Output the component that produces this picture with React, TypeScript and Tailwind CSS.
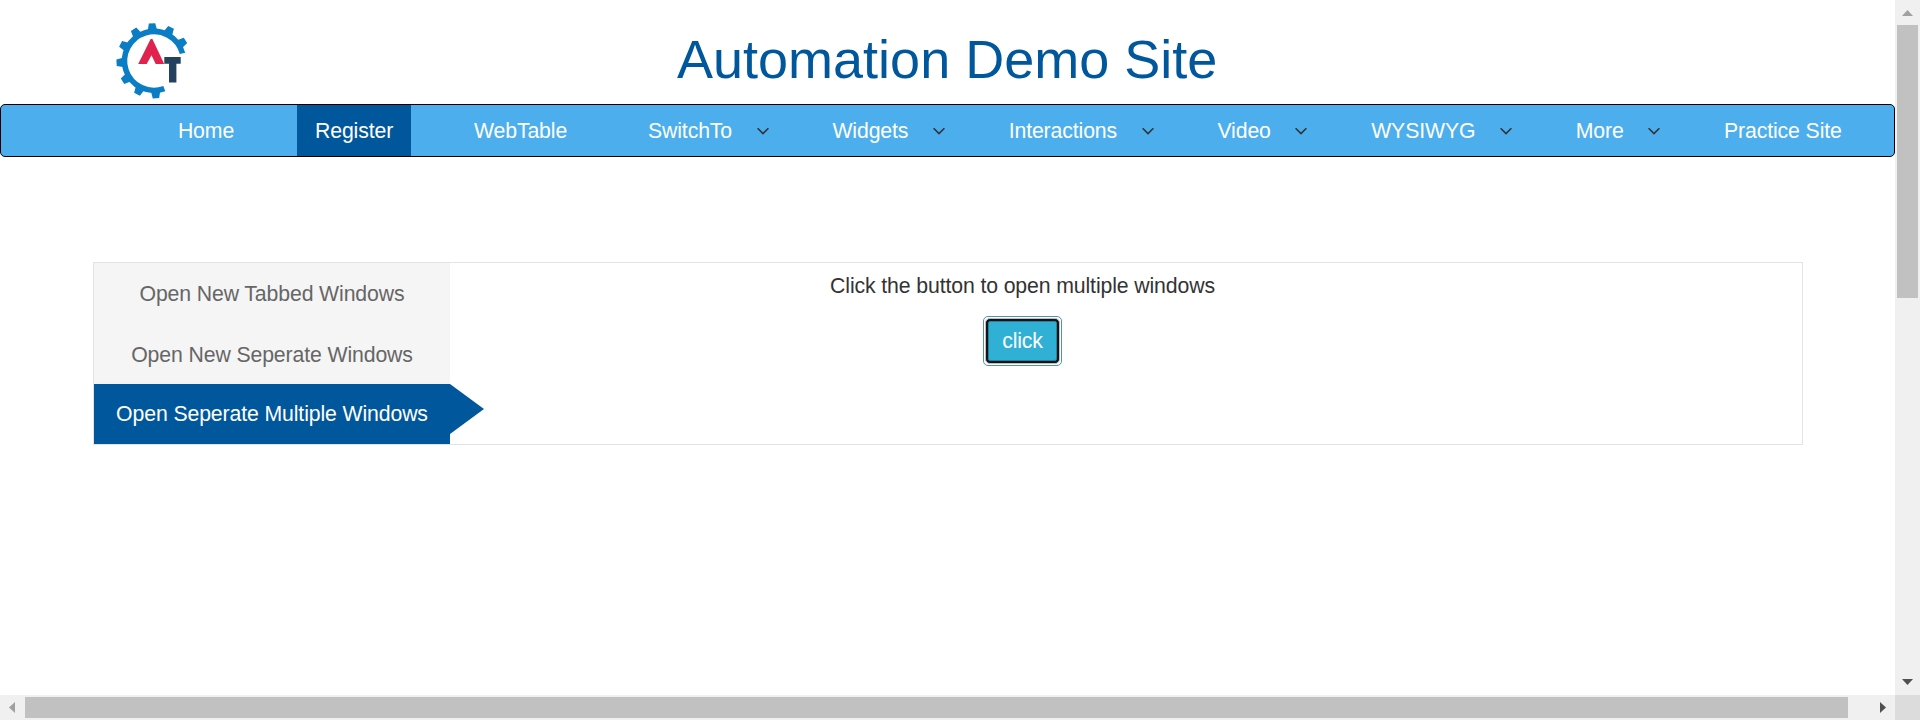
const navItems = [
  { label: 'Home' },
  { label: 'Register', active: true },
  { label: 'WebTable' },
  { label: 'SwitchTo', menu: true },
  { label: 'Widgets', menu: true },
  { label: 'Interactions', menu: true },
  { label: 'Video', menu: true },
  { label: 'WYSIWYG', menu: true },
  { label: 'More', menu: true },
  { label: 'Practice Site' },
];

const toothAngles = [-183, -153, -123, -93, -63, -33, -3, 27, 57];

function Logo() {
  return (
    <svg className="ml-[114px] mt-[20px] h-[80px] w-[78px] shrink-0" viewBox="0 0 78 80">
      <path d="M68.5 33.4 A29.5 29.5 0 1 0 50.3 68.6" fill="none" stroke="#0a7dc5" strokeWidth="5.6" />
      {toothAngles.map((a) => (
        <path key={a} d="M35.2 11 L36.8 3.3 H43.2 L44.8 11 Z" fill="#0a7dc5" transform={`rotate(${a} 40 40.8)`} />
      ))}
      <path d="M36.6 19 H38.4 L50.2 44 H41.7 L37.5 35.3 L32.7 44 H24.2 Z" fill="#e0234e" />
      <path d="M50.3 37 H66.7 V43.8 H62.4 V62.4 H55 V43.8 H50.3 Z" fill="#22425e" />
    </svg>
  );
}

function Chevron() {
  return (
    <span className="flex w-[19.5px] shrink-0 items-center">
      <svg className="ml-[6.7px] h-2 w-3 shrink-0" viewBox="0 0 12 8">
        <path d="M0.6 1.3 L6 6.6 L11.4 1.3" fill="none" stroke="#333" strokeWidth="1.6" />
      </svg>
    </span>
  );
}

function Header() {
  return (
    <header className="flex h-[104px] items-start">
      <Logo />
      <h1 className="ml-[485px] mt-[28px] whitespace-nowrap text-[54px] leading-[62px] tracking-normal text-[#00579c]">
        Automation Demo Site
      </h1>
    </header>
  );
}

function NavBar() {
  return (
    <nav className="flex h-[53px] gap-[44.85px] rounded-[5px] border border-black bg-[#4caeec] pl-[158.9px] text-white">
      {navItems.map((item) => (
        <div key={item.label} className="flex">
          <a className={`flex items-center whitespace-nowrap px-[18px] pt-[3px] ${item.active ? 'bg-[#00579c]' : ''}`}>
            {item.label}
          </a>
          {item.menu && <Chevron />}
        </div>
      ))}
    </nav>
  );
}

function Panel() {
  return (
    <section className="ml-[93px] mt-[105px] flex h-[183px] w-[1710px] border border-[#e3e3e3]">
      <ul className="flex w-[356px] shrink-0 flex-col bg-[#f5f5f5] text-center text-[#666]">
        <li className="h-[61px] leading-[62px]">Open New Tabbed Windows</li>
        <li className="h-[60px] leading-[62px]">Open New Seperate Windows</li>
        <li className="relative h-[60px] bg-[#00579c] leading-[60px] text-white">
          Open Seperate Multiple Windows
          <svg className="absolute left-full top-0 h-[50px] w-[34px]" viewBox="0 0 34 50">
            <path d="M0 0 L34 25 L0 50 Z" fill="#00579c" />
          </svg>
        </li>
      </ul>
      <div className="ml-[33px] flex w-[1079px] flex-col items-center">
        <p className="mt-[8px] leading-[30px]">Click the button to open multiple windows</p>
        <div className="mt-[15px] rounded-[5px] border border-[#4f94ad] p-px">
          <button className="block h-[46px] w-[75px] rounded-[5px] border border-[#c5bcc0] bg-[#101417] p-[2px] leading-[38px] text-white">
            <span className="block h-[40px] rounded-[2px] border border-[#2383a0] bg-[#31b0d5]">click</span>
          </button>
        </div>
      </div>
    </section>
  );
}

function VerticalScrollbar() {
  return (
    <div className="flex w-[25px] shrink-0 flex-col items-center bg-[#f0f0f0]">
      <svg className="h-[25px] w-[25px] shrink-0" viewBox="0 0 25 25">
        <path d="M7 16 L12.5 10 L18 16 Z" fill="#a0a0a0" />
      </svg>
      <div className="h-[273px] w-[21px] bg-[#c1c1c1]" />
      <svg className="mt-auto h-[25px] w-[25px] shrink-0" viewBox="0 0 25 25">
        <path d="M7 9 H18 L12.5 15 Z" fill="#505050" />
      </svg>
    </div>
  );
}

function HorizontalScrollbar() {
  return (
    <div className="flex h-[25px] shrink-0 items-center bg-[#f0f0f0]">
      <svg className="h-[25px] w-[25px] shrink-0" viewBox="0 0 25 25">
        <path d="M15 7 V18 L9 12.5 Z" fill="#a0a0a0" />
      </svg>
      <div className="h-[21px] w-[1823px] bg-[#c1c1c1]" />
      <svg className="ml-auto h-[25px] w-[25px] shrink-0" viewBox="0 0 25 25">
        <path d="M10 7 V18 L16 12.5 Z" fill="#505050" />
      </svg>
      <div className="h-[25px] w-[25px] shrink-0 bg-[#dcdcdc]" />
    </div>
  );
}

export default function App() {
  return (
    <div className="flex h-[720px] w-[1920px] flex-col overflow-hidden bg-white font-['Liberation_Sans',Arial,sans-serif] text-[21.25px] tracking-[-0.12px] text-[#333]">
      <div className="flex h-[695px]">
        <main className="w-[1895px] shrink-0">
          <Header />
          <NavBar />
          <Panel />
        </main>
        <VerticalScrollbar />
      </div>
      <HorizontalScrollbar />
    </div>
  );
}
